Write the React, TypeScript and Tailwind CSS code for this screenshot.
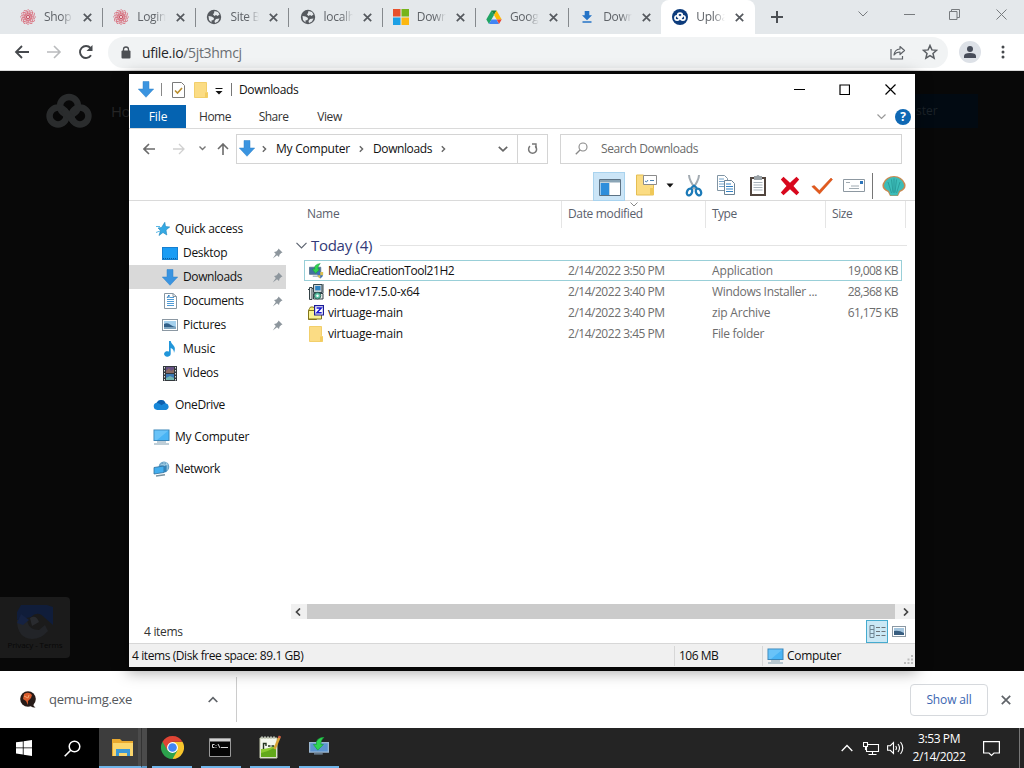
import React from "react";

type P = { className?: string; children?: React.ReactNode };

const Svg = ({ w, h, vb, className, children }: P & { w: number; h: number; vb?: string }) => (
  <svg width={w} height={h} viewBox={vb ?? `0 0 ${w} ${h}`} fill="none" className={"shrink-0 " + (className ?? "")}>
    {children}
  </svg>
);

/* ---------- shared glyphs ---------- */
const DownArrow = ({ className }: P) => (
  <Svg w={16} h={17} className={className}>
    <path d="M5 .5h6v7.500h4.700L8 16.300.3 8H5z" fill="#3a94e0" stroke="#2f80c8" strokeWidth=".5" />
  </Svg>
);
const Folder = ({ className }: P) => (
  <Svg w={14} h={16} className={className}>
    <path d="M.5.5h12v9l1 1v5H.5z" fill="#fbdc84" stroke="#efc755" strokeWidth=".8" />
    <path d="M11 10.500h2.500v5H11z" fill="#f3cc5f" />
  </Svg>
);
const ChevronR = ({ className }: P) => (
  <Svg w={5} h={8} className={className}>
    <path d="M.8 1.200 3.600 4 .8 6.800" stroke="#666" strokeWidth="1.400" />
  </Svg>
);
const Monitor = ({ className }: P) => (
  <Svg w={17} h={16} className={className}>
    <rect x="1" y="1" width="15" height="10.500" fill="#49b4f5" stroke="#3b86b8" />
    <path d="M1.500 1.500h14L4 11H1.500z" fill="#7fcdfa" opacity=".6" />
    <path d="M4 13h9M1 15h15" stroke="#7f9db0" />
  </Svg>
);
const Cloud = ({ s, color }: { s: number; color: string }) => (
  <Svg w={s} h={s * 0.78} vb="0 0 46 36">
    <g stroke={color} strokeWidth="6.500">
      <circle cx="23" cy="13" r="9" />
      <circle cx="12" cy="23" r="8.500" />
      <circle cx="34" cy="23" r="8.500" />
      <path d="m18 17 10 12" />
    </g>
  </Svg>
);

/* ---------- favicons ---------- */
const Flower = () => (
  <Svg w={16} h={16}>
    <g stroke="#d97583" strokeWidth=".9" strokeDasharray="2 .7">
      {[0, 30, 60, 90, 120, 150].map((a) => (
        <ellipse key={a} cx="8" cy="8" rx="7.300" ry="3" transform={`rotate(${a} 8 8)`} />
      ))}
    </g>
    <circle cx="8" cy="8" r="1.800" fill="#f1cdd1" stroke="#c34759" />
  </Svg>
);
const Globe = () => (
  <Svg w={16} h={16}>
    <circle cx="8" cy="8" r="7.200" fill="#55595e" />
    <path d="M8.500 2 12 3l1.500 2.500-2 1.500-1.500-1-1.500 1L7 5.500l1-1.500zM2.500 7l3 .5L8 9l-.5 2-2 .5v2L3 11zM10 10l3.500-.5-1.500 3-3 1.500-.5-2z" fill="#e4e8eb" />
  </Svg>
);
const MsLogo = () => (
  <Svg w={16} h={16}>
    <path d="M0 0h7.500v7.500H0z" fill="#e8512c" /><path d="M8.500 0H16v7.500H8.500z" fill="#76b41b" />
    <path d="M0 8.500h7.500V16H0z" fill="#1da0e5" /><path d="M8.500 8.500H16V16H8.500z" fill="#fbb711" />
  </Svg>
);
const Drive = () => (
  <Svg w={16} h={16}>
    <path d="M5.400 1.500 8 6 3 15 .3 10.500z" fill="#20a464" />
    <path d="M5.400 1.500h5.200L8 6z" fill="#188038" />
    <path d="M10.600 1.500 15.700 10.500h-5L8 6z" fill="#fbbc04" />
    <path d="M3 15h10l-2.500-4.500h-5z" fill="#4285f4" />
    <path d="M13 15l2.700-4.500h-5z" fill="#ea4335" />
  </Svg>
);
const DlIcon = () => (
  <Svg w={16} h={16}>
    <path d="M5.700 2h4.600v4.300h2.700L8 11.200 3 6.300h2.700zM3.500 12.300h9v1.500h-9z" fill="#2573c6" />
  </Svg>
);
const UfileIcon = () => (
  <span className="flex size-4 shrink-0 items-center justify-center rounded-full bg-[#0d3c7c]">
    <Cloud s={12} color="#fff" />
  </span>
);

const tabs = [
  { t: "Shop |", i: <Flower /> },
  { t: "Login", i: <Flower /> },
  { t: "Site B", i: <Globe /> },
  { t: "localh", i: <Globe /> },
  { t: "Down", i: <MsLogo /> },
  { t: "Goog", i: <Drive /> },
  { t: "Down", i: <DlIcon /> },
  { t: "Uploa", i: <UfileIcon /> },
];

const Close = () => (
  <Svg w={9} h={9} className="ml-[10px]">
    <path d="m.8.8 7.400 7.400M8.200.8.8 8.200" stroke="#55595e" strokeWidth="1.700" />
  </Svg>
);

function Browser() {
  return (
    <>
      <div className="flex h-[34px] bg-[#e4e8eb] pl-[9px]">
        {tabs.map((t, i) => {
          const active = i === 7;
          return (
            <div
              key={i}
              className={
                "relative flex h-[34px] w-[93.200px] shrink-0 items-center pl-[11px] " +
                (active ? "rounded-t-lg bg-white" : "")
              }
            >
              {t.i}
              <span className="ml-2 w-[29px] shrink-0 overflow-hidden whitespace-nowrap text-[12px] tracking-[-0.3px] text-[#5f6368] [mask-image:linear-gradient(to_right,black_60%,transparent_100%)]">
                {t.t}
              </span>
              <Close />
              {i < 6 && <span className="ml-[10px] h-[19px] w-px bg-[#85898d]" />}
            </div>
          );
        })}
        <Svg w={12} h={12} className="mt-[11px] ml-[16px]">
          <path d="M6 0v12M0 6h12" stroke="#4c5054" strokeWidth="2" />
        </Svg>
        <Svg w={10} h={6} className="mt-[11px] ml-[75px]"><path d="m.5.500 4.500 4.500L9.500.500" stroke="#777b7e" /></Svg>
        <Svg w={11} h={2} className="mt-[14px] ml-[36px]"><path d="M0 .500h11" stroke="#777b7e" /></Svg>
        <Svg w={11} h={11} className="mt-[9px] ml-[34px]"><path d="M.5 2.500h7.500v8H.5zM2.500 2.500v-2h8v8H8" stroke="#777b7e" /></Svg>
        <Svg w={11} h={11} className="mt-[9px] ml-[36px]"><path d="m.5.500 10 10m0-10-10 10" stroke="#777b7e" /></Svg>
      </div>
      <div className="flex h-[37px] items-center border-b border-[#dadada] bg-white pl-[14px]">
        <Svg w={16} h={14}><path d="M15 7H2m6-6L2 7l6 6" stroke="#46494d" strokeWidth="1.800" /></Svg>
        <Svg w={16} h={14} className="ml-4"><path d="M1 7h13M8 1l6 6-6 6" stroke="#b9bbbd" strokeWidth="1.600" /></Svg>
        <Svg w={16} h={16} className="ml-4">
          <path d="M13 11.300A6 6 0 1 1 12.500 4" stroke="#46494d" strokeWidth="1.900" />
          <path d="M14.500 1v6h-6z" fill="#46494d" />
        </Svg>
        <div className="ml-[14px] flex h-[31px] w-[840px] items-center rounded-full bg-[#f1f3f4] pl-[13px]">
          <Svg w={10} h={13}>
            <rect x=".5" y="4.500" width="9" height="8" rx="1" fill="#4c4f53" />
            <path d="M2.500 5V3.500a2.500 2.500 0 0 1 5 0V5" stroke="#4c4f53" strokeWidth="1.300" />
          </Svg>
          <span className="ml-[11px] flex-1 text-[14px] tracking-[-0.33px] text-[#6a6e72]">
            <span className="text-[#242629]">ufile.io</span>/5jt3hmcj
          </span>
          <Svg w={16} h={15}>
            <path d="M1 4v10h11.500v-3" stroke="#5f6368" strokeWidth="1.200" />
            <path d="M10 1.500 14.500 5.500 10 9.500V7Q6 7 4 10 4.500 4.500 10 4z" stroke="#5f6368" strokeWidth="1.200" strokeLinejoin="round" />
          </Svg>
          <Svg w={16} h={16} className="mr-[10px] ml-[16px]">
            <path d="m8 1.500 1.900 4.400 4.700.4-3.600 3.200 1.100 4.700L8 11.700l-4.100 2.500L5 9.500 1.400 6.300l4.700-.4z" stroke="#5a5e63" strokeWidth="1.500" />
          </Svg>
        </div>
        <span className="ml-[11px] flex size-[22px] items-center justify-center rounded-full bg-[#dde1e7]">
          <Svg w={12} h={12}>
            <circle cx="6" cy="3" r="3" fill="#474c59" />
            <path d="M0 12V10q0-3 6-3t6 3v2z" fill="#474c59" />
          </Svg>
        </span>
        <Svg w={4} h={14} className="ml-5">
          <circle cx="2" cy="2" r="1.500" fill="#46494d" /><circle cx="2" cy="7" r="1.500" fill="#46494d" /><circle cx="2" cy="12" r="1.500" fill="#46494d" />
        </Svg>
      </div>
    </>
  );
}

/* ---------- page behind the window ---------- */
function Page() {
  return (
    <div className="flex h-[600px] flex-col justify-between bg-[#080808]">
      <div className="flex items-center pt-[22px] pl-[46px]">
        <Cloud s={46} color="#2a2c2d" />
        <span className="ml-[19px] text-[15px] tracking-[-0.5px] text-[#262626]">Ho</span>
        <span className="mr-[46px] ml-auto flex h-[34px] w-[92px] items-center bg-[#020a12] pl-[30px] text-[12px] text-[#1c2329]">ster</span>
      </div>
      <div className="mb-[13px] flex h-[61px] w-[70px] flex-col items-center rounded-r-sm bg-[#1b1b1b] pt-[7px]">
        <Svg w={38} h={36}>
          <path d="M5 1h26l6 2v18l-8-7q-7-8-14-1L1 16V8z" fill="#101d3a" />
          <path d="M1 16l10-1q1 11 12 11l6-5 3 6q-7 8-16 8Q1 34 1 16z" fill="#222428" />
          <path d="m5 10 8 6-6 5-6-2z" fill="#152242" />
          <path d="M14 14q6-4 9 4l-7 4z" fill="#292b2f" />
        </Svg>
        <span className="text-[8px] leading-[10px] tracking-[-0.1px] text-[#080808]">Privacy - Terms</span>
      </div>
    </div>
  );
}

/* ---------- explorer sidebar ---------- */
const Pin = () => (
  <Svg w={11} h={11} className="mr-[3px] ml-auto">
    <path d="m6.500.5 4 4-1.300.5L7.500 6.700 7 9 5 7.200.8 10.500 3.800 6 2 4l2.300-.5L6 1.800z" fill="#8d969d" />
  </Svg>
);
const Star = () => (
  <Svg w={14} h={14}>
    <path d="M8.800.3 9.500 4.500l4.200.5-3.700 3 .8 5L7 10.500 3 13.500l1.500-5L2 6l3.500-.5z" fill="#35a9e4" stroke="#1c84bb" strokeWidth=".6" />
    <path d="M0 10.500 4 9M0 4.500h4" stroke="#5bb9e8" />
  </Svg>
);
const DesktopI = () => (
  <Svg w={16} h={13}><rect x=".5" y=".5" width="15" height="12" fill="#1a9cf4" stroke="#167fd0" /><path d="M1 11.500h14" stroke="#0b5e9e" strokeDasharray="1 1" /></Svg>
);
const DocI = () => (
  <Svg w={13} h={16}>
    <path d="M.5.5h8.500l3.500 3v12H.5z" fill="#fff" stroke="#8796a2" />
    <path d="M9 .5v3h3.500" stroke="#8796a2" />
    <path d="M6 4.500h4M3 6.500h7M3 8.500h7M3 10.500h7M3 12.500h7" stroke="#4f9bd6" /><path d="m3 5 2-3v3" stroke="#2479bd" />
  </Svg>
);
const PicI = () => (
  <Svg w={16} h={12}>
    <rect x=".5" y=".5" width="15" height="11" fill="#fff" stroke="#8b98a3" />
    <path d="M2 2h12v8H2z" fill="#a4d0ed" /><path d="M2 5q3-1.500 6 .5t6 2.500H2z" fill="#315f88" /><path d="M2 8h12v2H2z" fill="#7fa5bf" />
  </Svg>
);
const MusicI = () => (
  <Svg w={12} h={16}>
    <path d="M5 0h1.700q.3 2.500 2.800 4.500T10 12q0-4-3.300-5v6a3.300 2.800 0 1 1-1.700-2.500z" fill="#2196da" />
  </Svg>
);
const VideoI = () => (
  <Svg w={14} h={15}>
    <path d="M0 0h14v15H0z" fill="#33383d" /><path d="M3 1h8v6H3z" fill="#665085" /><path d="M3 8h8v6H3z" fill="#3b7ab5" />
    <path d="m3 5 3-3 2 3 3-2v4H3z" fill="#8a6a63" /><path d="m3 12 4-2 4 2v2H3z" fill="#75b6b0" />
    <path d="M1.500 1v14M12.500 1v14" stroke="#dce0e3" strokeDasharray="1.500 1.500" />
  </Svg>
);
const OneDriveI = () => (
  <Svg w={17} h={12}>
    <path d="M4.200 11A3.700 3.700 0 0 1 3.600 3.700 5 5 0 0 1 12.600 4.200 3.500 3.500 0 0 1 13.200 11z" fill="#1787d8" />
    <path d="M3.600 3.700A5 5 0 0 1 12.600 4.200Q10 4.500 8.500 6.300 6 3.800 3.600 3.700z" fill="#0c5fae" />
  </Svg>
);
const NetI = () => (
  <Svg w={17} h={16}>
    <circle cx="11" cy="5.800" r="5.300" fill="#6aa3c7" /><path d="M7.500 3q4 2.500 7.500 0M11 .5v6M13 1q2 4 1 8" stroke="#b2d9ec" strokeWidth=".8" />
    <path d="M1 6.500 11 5v6.500l-10 1.500z" fill="#43aeee" stroke="#2d6f9d" strokeWidth=".8" />
    <path d="m3 15 9-1.300" stroke="#78919f" strokeWidth="1.400" /><path d="m11 5 2.500-.5v6.500L11 11.500" fill="#3483b8" />
  </Svg>
);

const quick = [
  { n: "Desktop", i: <DesktopI />, pin: true, ls: "tracking-[-0.3px]" },
  { n: "Downloads", i: <DownArrow />, pin: true, sel: true, ls: "tracking-[-0.4px]" },
  { n: "Documents", i: <DocI />, pin: true, ls: "tracking-[-0.4px]" },
  { n: "Pictures", i: <PicI />, pin: true, ls: "tracking-[-0.25px]" },
  { n: "Music", i: <MusicI />, ls: "tracking-[-0.1px]" },
  { n: "Videos", i: <VideoI />, ls: "tracking-[-0.3px]" },
];
const roots = [
  { n: "OneDrive", i: <OneDriveI />, ls: "tracking-[-0.35px]" },
  { n: "My Computer", i: <Monitor />, ls: "tracking-[-0.2px]" },
  { n: "Network", i: <NetI />, ls: "tracking-[-0.4px]" },
];

function Sidebar() {
  return (
    <div className="flex w-[162px] shrink-0 flex-col pt-[16px] text-[12px] text-[#111]">
      <div className="flex h-6 items-center pl-[27px]">
        <Star /><span className="ml-[5px] tracking-[-0.28px]">Quick access</span>
      </div>
      {quick.map((q) => (
        <div key={q.n} className={"flex h-6 w-[157px] items-center pl-[32px] " + (q.sel ? "bg-[#d9d9d9]" : "")}>
          <span className="flex w-[18px] justify-center">{q.i}</span>
          <span className={"ml-[4px] " + q.ls}>{q.n}</span>
          {q.pin && <Pin />}
        </div>
      ))}
      {roots.map((r) => (
        <div key={r.n} className="mt-2 flex h-6 items-center pl-[24px]">
          {r.i}<span className={"ml-[5px] " + r.ls}>{r.n}</span>
        </div>
      ))}
    </div>
  );
}

/* ---------- file icons ---------- */
const ToolI = ({ big }: { big?: boolean }) => (
  <Svg w={big ? 20 : 15} h={big ? 20 : 16} vb="0 0 16 16">
    <path d={big ? "M.5 4.500h15V12H.5z" : "M.5 4h12v7.500H.5z"} fill={big ? "#5c94d0" : "#42719f"} stroke={big ? "#9cb8d2" : "#5a7690"} />
    <path d="M4 13.500h7" stroke="#7b93a9" />
    <path d="M12 0Q5 1 6 6H3.500l3.500 4.500L11.500 6H9.500Q9 3 12 0z" fill="#2fd451" stroke="#159b3a" strokeWidth=".5" />
    {!big && <><path d="M9 9h6v3q0 2-3 4-3-2-3-4z" fill="#3b71bb" /><path d="M12 9h3v3.500h-3zM9 12.500h3V16q-3-1.500-3-3.500z" fill="#dcc04f" /></>}
  </Svg>
);
const MsiI = () => (
  <Svg w={16} h={16}>
    <path d="M5.500.5h8.500v8H5.500z" fill="#c9d2d6" stroke="#33474f" /><path d="M7.200 2h5.300v4.300H7.200z" fill="#2c83c4" />
    <path d="M14.500 0h1v9h-1z" fill="#33474f" />
    <path d="M1.500 3.500h2.500v12H1.500z" fill="#dfe4e4" stroke="#344146" /><path d="M0 5.500h2M4 4.500h2" stroke="#344146" />
    <path d="M5.500 9.500H15v5.500H5.500z" fill="#eef0ee" stroke="#344146" />
    <circle cx="9.500" cy="11.700" r="3.300" fill="#59c0a3" stroke="#28584f" strokeWidth=".8" /><circle cx="9.500" cy="11.700" r="1.200" fill="#fff" />
  </Svg>
);
const ZipI = () => (
  <Svg w={16} h={16}>
    <path d="M1.500 3.500 2.500 2h3l1 1.500h2v11h-8v-9z" fill="#f8ef78" stroke="#82751b" />
    <path d="M.5 5.500h13v8.500H.5z" fill="#faf391" stroke="#82751b" />
    <path d="M6.600.600h8.800v9.400H6.600z" fill="#fff" stroke="#1c1c96" strokeWidth="1.200" /><path d="M8.500 3h4.700L8.900 7.700h4.800" stroke="#1818d0" strokeWidth="1.500" />
  </Svg>
);

const files = [
  { n: "MediaCreationTool21H2", d: "2/14/2022 3:50 PM", t: "Application", s: "19,008 KB", i: <ToolI />, ls: "tracking-[-0.46px]", lt: "tracking-[-0.15px]" },
  { n: "node-v17.5.0-x64", d: "2/14/2022 3:40 PM", t: "Windows Installer ...", s: "28,368 KB", i: <MsiI />, ls: "tracking-[-0.3px]", lt: "tracking-[-0.32px]" },
  { n: "virtuage-main", d: "2/14/2022 3:40 PM", t: "zip Archive", s: "61,175 KB", i: <ZipI />, ls: "tracking-[-0.2px]", lt: "tracking-[-0.2px]" },
  { n: "virtuage-main", d: "2/14/2022 3:45 PM", t: "File folder", s: "", i: <Folder />, ls: "tracking-[-0.2px]", lt: "tracking-[-0.3px]" },
];

function FileList() {
  return (
    <div className="flex min-w-0 flex-1 flex-col text-[12px]">
      <div className="flex h-[27px] text-[#5a606c]">
        <span className="w-[271px] border-r border-[#e5e5e5] pt-[4px] pl-[16px] tracking-[-0.3px]">Name</span>
        <span className="relative w-[144px] border-r border-[#e5e5e5] pt-[4px] pl-[6px] tracking-[-0.35px]">
          Date modified
          <Svg w={8} h={5} className="absolute top-[1px] left-[68px]"><path d="m.5.500 3.500 3.500L7.500.500" stroke="#888" /></Svg>
        </span>
        <span className="w-[120px] border-r border-[#e5e5e5] pt-[4px] pl-[6px] tracking-[-0.5px]">Type</span>
        <span className="w-[80px] border-r border-[#e5e5e5] pt-[4px] pl-[6px] tracking-[-0.4px]">Size</span>
      </div>
      <div className="mt-[6px] flex h-[22px] items-center pl-[5px]">
        <Svg w={11} h={7}><path d="m.5.800 5 5 5-5" stroke="#5d6470" strokeWidth="1.200" /></Svg>
        <span className="ml-[4px] text-[15px] tracking-[-0.28px] text-[#323a78]">Today (4)</span>
        <span className="mr-[8px] ml-[8px] h-px flex-1 bg-[#e4e4e4]" />
      </div>
      <div className="mt-[4px] flex flex-col pl-[13px]">
        {files.map((f, i) => (
          <div key={i} className={"flex h-[21px] w-[598px] items-center border " + (i === 0 ? "border-[#99cfd8]" : "border-transparent")}>
            <span className="flex w-[22px] justify-center">{f.i}</span>
            <span className={"ml-px w-[240px] whitespace-nowrap text-[#111] " + f.ls}>{f.n}</span>
            <span className="w-[144px] whitespace-nowrap tracking-[-0.48px] text-[#6d6d6d]">{f.d}</span>
            <span className={"w-[120px] whitespace-nowrap text-[#6d6d6d] " + f.lt}>{f.t}</span>
            <span className="flex-1 pr-[3px] text-right whitespace-nowrap tracking-[-0.6px] text-[#6d6d6d]">{f.s}</span>
          </div>
        ))}
      </div>
      <div className="mt-auto flex h-[15px] items-center bg-[#f0f0f0]">
        <Svg w={16} h={8}><path d="M9 .5 5.500 4 9 7.500" stroke="#444" strokeWidth="1.700" /></Svg>
        <span className="h-[15px] w-[588px] bg-[#cbcbcb]" />
        <Svg w={19} h={8}><path d="M9 .5 12.500 4 9 7.500" stroke="#444" strokeWidth="1.700" /></Svg>
      </div>
    </div>
  );
}

function Toolbar() {
  return (
    <div className="flex h-[33px] items-center border-b border-[#dadada] pl-[464px]">
      <span className="mt-[4px] flex h-[29px] w-8 items-center justify-center border border-[#a9d3ee] bg-[#cbe5f7]">
        <Svg w={22} h={17} className="mt-[2px] ml-[2px]">
          <path d="M.5.500h21v16H.5z" fill="#fff" stroke="#5c7284" /><path d="M1 1h20v2.500H1z" fill="#8ba5b6" /><path d="M1.500 4H10v12H1.500z" fill="#2f8edb" />
          <path d="M10.500 4v12" stroke="#c4d8e5" />
        </Svg>
      </span>
      <Svg w={24} h={24} className="mt-[2px] ml-[10px]">
        <path d="M1.500 2h7l2 3h8v17h-17z" fill="#fbdc83" stroke="#e5be52" /><path d="M15 15h4v7h-4z" fill="#efc858" />
        <path d="M8.500 2.500h13v9h-13z" fill="#fff" stroke="#8b8b8b" /><path d="m10 8 1.500 1L13 7M15 7.500h4" stroke="#4c82b0" />
      </Svg>
      <Svg w={8} h={5} className="mt-[2px] ml-[7px]"><path d="M.5.500h7L4 4.500z" fill="#111" /></Svg>
      <Svg w={18} h={23} className="mt-[3px] ml-[11px]">
        <path d="M4 1q0 5 7 15M14 1q0 5-7 15" stroke="#a3abb2" strokeWidth="2" />
        <ellipse cx="4.500" cy="18" rx="2.500" ry="3.500" transform="rotate(25 4.500 18)" stroke="#1b7ab8" strokeWidth="2.300" />
        <ellipse cx="13.500" cy="18" rx="2.500" ry="3.500" transform="rotate(-25 13.500 18)" stroke="#1b7ab8" strokeWidth="2.300" />
        <path d="m6 14 3-2.500 3 2.500" stroke="#1b7ab8" strokeWidth="2" />
      </Svg>
      <Svg w={20} h={22} className="mt-[2px] ml-[13px]">
        <path d="M1.500 1.500h7l3 3v12h-10z" fill="#fff" stroke="#8195a4" /><path d="M3 5h5M3 7.500h6M3 10h6M3 12.500h6" stroke="#75a4cb" />
        <path d="M8.500 6.500h7l3 3v11h-10z" fill="#fff" stroke="#6a8294" /><path d="M10 10h5M10 12.500h7M10 15h7M10 17.500h7" stroke="#3482c3" />
      </Svg>
      <Svg w={20} h={23} className="mt-[3px] ml-[12px]">
        <path d="M2 3h16v19H2z" fill="#51453e" /><path d="M4 5h12v15H4z" fill="#fff" /><path d="M6 2h2.500a1.600 1.600 0 0 1 3 0H14v4H6z" fill="#9aa2a7" />
        <path d="M5.500 8.500h9M5.500 11h9M5.500 13.500h9M5.500 16h9" stroke="#a9b3bb" />
      </Svg>
      <Svg w={20} h={20} className="mt-[3px] ml-[12px]">
        <path d="M3.500.8 10 6.800l6.500-6L19.200 3.500 13.500 10l5.700 6.500-2.700 2.700L10 13.200l-6.500 6L.8 16.500 6.500 10 .8 3.500z" fill="#d8081d" />
      </Svg>
      <Svg w={22} h={18} className="mt-[3px] ml-[11px]">
        <path d="m.8 9.500 2.500-1 5 5L20 1l1.500 1.500L8.500 17z" fill="#e35a1c" stroke="#c9440f" strokeWidth=".5" />
      </Svg>
      <Svg w={24} h={15} className="mt-[3px] ml-[9px]">
        <path d="M1.500 1.500h21v12h-21z" fill="#fff" stroke="#8d98a1" /><path d="M18 3h3v3h-3z" fill="#2c74ba" /><path d="M4 4.500h4M9 8h8M7 10.500h10" stroke="#a1abb2" />
      </Svg>
      <span className="mt-[4px] ml-[6px] h-[26px] w-px bg-[#767676]" />
      <Svg w={24} h={22} className="mt-[3px] ml-[9px]">
        <path d="M6 17Q-1 14 .8 8.500 4 1 12 1t11.200 7.500Q25 14 18 17l-2 4H8z" fill="#c98a52" />
        <path d="M7 16Q.5 13 2.500 8.500 5.500 2 12 2t9.500 6.500Q23.500 13 17 16l-1.500 4.500h-7z" fill="#3cbcb8" />
        <path d="M9.500 18 6 7m5 10.500L9.500 4.500M12 18V3.500m1 14L14.500 4.500M14.500 18 18 7" stroke="#23908f" strokeWidth=".7" />
      </Svg>
    </div>
  );
}

function Explorer() {
  return (
    <div className="absolute top-[74px] left-[129px] flex h-[593px] w-[786px] flex-col bg-white shadow-[0_3px_14px_2px_rgba(0,0,0,0.35)]">
      {/* title bar */}
      <div className="flex h-[31px] items-center pl-[9px]">
        <DownArrow />
        <span className="ml-[7px] h-[13px] w-px bg-[#888]" />
        <Svg w={13} h={16} className="ml-[10px]">
          <path d="M.5.500h9l3 3v12H.5z" fill="#fff" stroke="#7a7a7a" /><path d="m3 8.500 2.500 2.500L10 6" stroke="#b98d2c" strokeWidth="1.600" />
        </Svg>
        <Folder className="ml-[9px]" />
        <Svg w={8} h={7} className="mt-[3px] ml-[7px]"><path d="M.5.500h7" stroke="#111" /><path d="M.5 3h7L4 6.400z" fill="#111" /></Svg>
        <span className="ml-[8px] h-[13px] w-px bg-[#777]" />
        <span className="ml-[7px] text-[12px] tracking-[-0.35px] text-[#111]">Downloads</span>
        <div className="mr-[19px] ml-auto flex items-center">
          <Svg w={11} h={11}><path d="M0 5.500h11" stroke="#000" /></Svg>
          <Svg w={11} h={11} className="ml-[34px]"><path d="M1 1h9.500v9.500H1z" stroke="#000" strokeWidth="1.200" /></Svg>
          <Svg w={11} h={11} className="ml-[35px]"><path d="m.5.500 10 10m0-10-10 10" stroke="#000" strokeWidth="1.200" /></Svg>
        </div>
      </div>
      {/* ribbon tabs */}
      <div className="flex h-[24px] items-stretch border-b border-[#dadada] pl-px text-[12px] text-[#333]">
        <span className="flex w-[56px] items-center justify-center bg-[#0563b1] tracking-[-0.1px] text-white">File</span>
        <span className="flex w-[58px] items-center justify-center tracking-[-0.5px]">Home</span>
        <span className="flex w-[59px] items-center justify-center tracking-[-0.5px]">Share</span>
        <span className="flex w-[53px] items-center justify-center tracking-[-0.4px]">View</span>
        <div className="mr-[4px] ml-auto flex items-center">
          <Svg w={9} h={6}><path d="m.5.500 4 4 4-4" stroke="#999" strokeWidth="1.200" /></Svg>
          <span className="ml-[9px] flex size-4 items-center justify-center rounded-full bg-[#0f68b4] text-[12px] font-bold text-white">?</span>
        </div>
      </div>
      {/* address row */}
      <div className="flex h-[39px] items-center pl-[14px]">
        <Svg w={12} h={12}><path d="M12 6H1m5-5L1 6l5 5" stroke="#6b6b6b" strokeWidth="1.600" /></Svg>
        <Svg w={12} h={12} className="ml-[18px]"><path d="M0 6h11M6 1l5 5-5 5" stroke="#d0d0d0" strokeWidth="1.300" /></Svg>
        <Svg w={7} h={5} className="ml-[14px]"><path d="m.5.500 3 3 3-3" stroke="#777" strokeWidth="1.400" /></Svg>
        <Svg w={12} h={12} className="ml-[11px]"><path d="M6 12V1M1 6l5-5 5 5" stroke="#6b6b6b" strokeWidth="1.600" /></Svg>
        <div className="ml-[7px] flex h-[30px] w-[312px] items-center border border-[#d4d4d4] pl-[2px] text-[12px] text-[#111]">
          <DownArrow />
          <ChevronR className="ml-[7px]" />
          <span className="ml-[9px] w-[75px] whitespace-nowrap tracking-[-0.22px]">My Computer</span>
          <ChevronR className="ml-[8px]" />
          <span className="ml-[9px] w-[60px] whitespace-nowrap tracking-[-0.4px]">Downloads</span>
          <ChevronR className="ml-[8px]" />
          <Svg w={10} h={6} className="mr-[9px] ml-auto"><path d="m.800.800 4.200 4 4.200-4" stroke="#666" strokeWidth="1.700" /></Svg>
          <span className="flex h-[28px] w-[30px] items-center justify-center border-l border-[#d4d4d4]">
            <Svg w={11} h={12}><path d="M8.200 3.100A4 4 0 1 1 3 3.100" stroke="#777" strokeWidth="1.500" /><path d="M5 1h4v4.200" stroke="#777" strokeWidth="1.400" /></Svg>
          </span>
        </div>
        <div className="ml-[12px] flex h-[30px] w-[342px] items-center border border-[#d4d4d4] pl-[14px] text-[12px] text-[#6a6a6a]">
          <Svg w={13} h={13}><circle cx="8" cy="5" r="4" stroke="#888" strokeWidth="1.100" /><path d="M5 8 .8 12.200" stroke="#888" strokeWidth="1.300" /></Svg>
          <span className="ml-[13px] tracking-[-0.42px]">Search Downloads</span>
        </div>
      </div>
      <Toolbar />
      <div className="flex h-[418px]"><Sidebar /><FileList /></div>
      <div className="flex h-[24px] items-center pl-[15px] text-[12px] text-[#333]">
        <span className="pt-px tracking-[-0.3px]">4 items</span>
        <span className="ml-auto flex h-[23px] w-[22px] items-center justify-center border border-[#46abcf] bg-[#cbe8f5]">
          <Svg w={17} h={13}><path d="M1 .5h4v12H1zM1 4.500h4M1 8.500h4" stroke="#6e8492" /><path d="M7 2.500h4M12.500 2.500h4M7 6.500h4M12.500 6.500h4M7 10.500h4M12.500 10.500h4" stroke="#6e7478" /></Svg>
        </span>
        <Svg w={14} h={11} className="mr-[9px] ml-[4px]"><rect x=".5" y=".5" width="13" height="10" fill="#fff" stroke="#8b98a3" /><path d="M2 2h10v7H2z" fill="#a4c5de" /><path d="M2 5q5-1 10 2v2H2z" fill="#385d7f" /></Svg>
      </div>
      <div className="flex h-[24px] items-center border-t border-[#d7d7d7] bg-[#f0f0f0] pl-[3px] text-[12px] text-[#111]">
        <span className="w-[542px] tracking-[-0.41px]">4 items (Disk free space: 89.1 GB)</span>
        <span className="flex h-5 w-[88px] items-center border-l border-[#d7d7d7] pl-[4px] tracking-[-0.5px]">106 MB</span>
        <span className="flex h-5 flex-1 items-center border-l border-[#d7d7d7] pl-[4px]">
          <Monitor /><span className="ml-[3px] tracking-[-0.3px]">Computer</span>
          <Svg w={9} h={9} className="mt-[8px] mr-[2px] ml-auto"><path d="M7 0h2v2H7zM7 3.500h2v2H7zM7 7h2v2H7zM3.500 3.500h2v2h-2zM3.500 7h2v2h-2zM0 7h2v2H0z" fill="#bcbcbc" /></Svg>
        </span>
      </div>
    </div>
  );
}

function DownloadBar() {
  return (
    <div className="flex h-[57px] items-center bg-white pl-[20px]">
      <Svg w={17} h={17}>
        <circle cx="8" cy="8" r="7.800" fill="#271b18" /><path d="M13 12q0 3 2.500 4.500-5 .5-5-3z" fill="#271b18" />
        <path d="M4 3q5-3 8 1l-1 3-3 3v4l-2-4-3-2z" fill="#d95c2d" /><path d="m4 5 4 2 1-3" stroke="#f5a16b" />
      </Svg>
      <span className="ml-[12px] w-[159px] pt-px text-[13px] tracking-[-0.3px] text-[#55585c]">qemu-img.exe</span>
      <Svg w={10} h={7}><path d="m.7 6 4.300-4.300L9.300 6" stroke="#5f6368" strokeWidth="1.700" /></Svg>
      <span className="ml-[18px] h-[45px] w-px bg-[#ccc]" />
      <span className="ml-auto flex h-[32px] w-[78px] items-center justify-center rounded-[4px] border border-[#d6d9dd] text-[12px] font-medium tracking-[-0.15px] text-[#3c66b1]">Show all</span>
      <Svg w={10} h={10} className="mr-[13px] ml-[13px]"><path d="m.800.800 8.400 8.400m0-8.400L.8 9.200" stroke="#5f6368" strokeWidth="1.700" /></Svg>
    </div>
  );
}

const Task = ({ children }: P) => (
  <span className="ml-[9px] flex h-10 w-10 items-center justify-center border-b-2 border-[#70b5ea]">{children}</span>
);

function Taskbar() {
  return (
    <div className="flex h-10 items-center bg-[#242424] text-white">
      <div className="flex h-10 w-[99px] items-center bg-black pl-[16px]">
        <Svg w={16} h={16}><path d="m0 2.300 6.800-.9v6.100H0zM7.600 1.300 16 0v7.500H7.600zM0 8.300h6.800v6.200L0 13.600zM7.600 8.300H16V16l-8.400-1.200z" fill="#fff" /></Svg>
        <Svg w={17} h={17} className="ml-8"><circle cx="10.500" cy="6.500" r="5.300" stroke="#fff" strokeWidth="1.500" /><path d="m6.700 10.300-6 6" stroke="#fff" strokeWidth="1.600" /></Svg>
      </div>
      <span className="flex h-10 w-[39px] items-center justify-end border-b-2 border-[#70b5ea] bg-[#3d3d3d] pr-[4px]">
        <Svg w={22} h={19}>
          <path d="M0 1h8l2 2h11v15H0z" fill="#e9a92f" /><path d="M1 5h20v13H1z" fill="#fbd66c" /><path d="M4 18v-7h14v7h-3v-3H7v3z" fill="#3c98d5" />
        </Svg>
      </span>
      <span className="h-10 w-[4px] border-r border-b-2 border-r-[#333] border-b-[#70b5ea] bg-[#4b4b4b]" />
      <span className="mr-[-4px] h-10 w-[5px] border-b-2 border-[#5f9cca] bg-[#4b4b4b]" />
      <Task>
        <Svg w={23} h={23} vb="0 0 24 24">
          <path d="M12 12V6h10.400A12 12 0 0 1 12 24z" fill="#f8c52c" />
          <path d="M12 12 1.600 6A12 12 0 0 0 12 24l5.200-9z" fill="#2ca24c" /><path d="M12 0A12 12 0 0 1 22.400 6H12L6.800 15 1.600 6A12 12 0 0 1 12 0z" fill="#df4434" />
          <circle cx="12" cy="12" r="5.700" fill="#fff" /><circle cx="12" cy="12" r="4.500" fill="#4285f4" />
        </Svg>
      </Task>
      <Task>
        <Svg w={22} h={19} className="mr-[2px]"><path d="M.5.500h21v18H.5z" fill="#050505" stroke="#999" /><path d="M1 1h20v2.500H1z" fill="#d3d3d3" />
          <path d="M5.500 6.500H3.500v3h2M7 7v.8M7 9v.800M9 6l2 4M12 9.500h7" stroke="#ededed" strokeWidth=".9" /></Svg>
      </Task>
      <Task>
        <Svg w={23} h={24} className="mr-[2px]">
          <path d="M2 3h17v20H2z" fill="#f4f7ed" stroke="#c5caae" /><path d="M3 14q8 0 15-4v12H3z" fill="#8dca32" /><path d="M3 18q8-2 15-6v10H3z" fill="#62a91b" />
          <path d="M3 2.500h15" stroke="#b6bbb0" strokeDasharray="2 1" strokeWidth="2" /><path d="M5.500 14V8.500h2.500V11M10 11h2.500M13.500 11H16" stroke="#24351f" strokeWidth="1.400" />
          <path d="m21.500 2-5 12" stroke="#dca535" strokeWidth="2.500" /><path d="m22 1-1 2" stroke="#d15a43" strokeWidth="2.500" />
        </Svg>
      </Task>
      <Task><ToolI big /></Task>
      <div className="ml-auto flex items-center">
        <Svg w={12} h={8}><path d="m.7 7 5.300-5.500L11.300 7" stroke="#fff" strokeWidth="1.300" /></Svg>
        <Svg w={17} h={15} className="ml-[10px]">
          <path d="M5 3.500h10.500v7H3.500V6M9.500 10.500v3M5.500 13.500h8M.5 1.500h4v4h-4zM2.500 5.500v3h1" stroke="#fff" strokeWidth="1.100" />
        </Svg>
        <Svg w={17} h={14} className="ml-[7px]">
          <path d="M.6 4.700h2.700L6.500 1.500v11L3.300 9.300H.6zM8.700 5q1.500 2 0 4M11 3q3 4 0 8M13.500 1q4.500 6 0 12" stroke="#fff" strokeWidth="1.100" />
        </Svg>
        <div className="ml-[6px] flex w-[58px] flex-col items-center text-[12px] leading-[18px] whitespace-nowrap">
          <span className="tracking-[-0.4px]">3:53 PM</span><span className="tracking-[-0.45px]">2/14/2022</span>
        </div>
        <Svg w={17} h={17} className="mr-[19px] ml-[15px]"><path d="M.6 1.600h15.800v11.400H11l-2.500 2.500L6 13H.6z" stroke="#fff" strokeWidth="1.200" /></Svg>
        <span className="mr-[4px] h-10 w-px bg-[#777]" />
      </div>
    </div>
  );
}

export default function App() {
  return (
    <div className="relative flex h-[768px] w-[1024px] flex-col overflow-hidden bg-black font-['Open_Sans','Noto_Sans',sans-serif]">
      <Browser />
      <Page />
      <DownloadBar />
      <Taskbar />
      <Explorer />
    </div>
  );
}
